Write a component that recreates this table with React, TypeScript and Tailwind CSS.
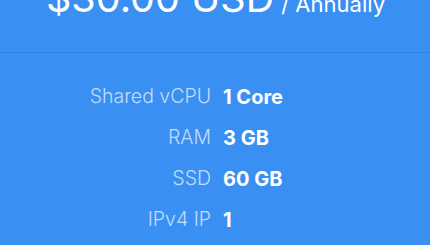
export default function App() {
  const specs = [
    { label: 'Shared vCPU', value: '1 Core' },
    { label: 'RAM', value: '3 GB' },
    { label: 'SSD', value: '60 GB' },
    { label: 'IPv4 IP', value: '1' },
  ];

  return (
    <div className="w-[430px] h-[245px] overflow-hidden bg-[#3a90f2] text-white font-['Inter',sans-serif]">
      {/* Price header */}
      <div className="h-[53px] border-b border-[#2f82e0] overflow-hidden">
        <div className="-mt-[26px] pl-[46px] flex items-baseline whitespace-nowrap">
          <span className="text-[39.5px] leading-[48px] font-normal">$30.00 USD</span>
          <span className="ml-[7px] text-[22px] leading-[48px]">/ Annually</span>
        </div>
      </div>

      {/* Specs */}
      <div className="pt-[32px] flex flex-col gap-[18px]">
        {specs.map((s) => (
          <div key={s.label} className="flex items-center h-[23px]">
            <div className="w-[211px] text-right text-white/70 font-light text-[19.5px]">{s.label}</div>
            <div className="ml-[12px] font-bold text-[20px]">{s.value}</div>
          </div>
        ))}
      </div>
    </div>
  );
}
